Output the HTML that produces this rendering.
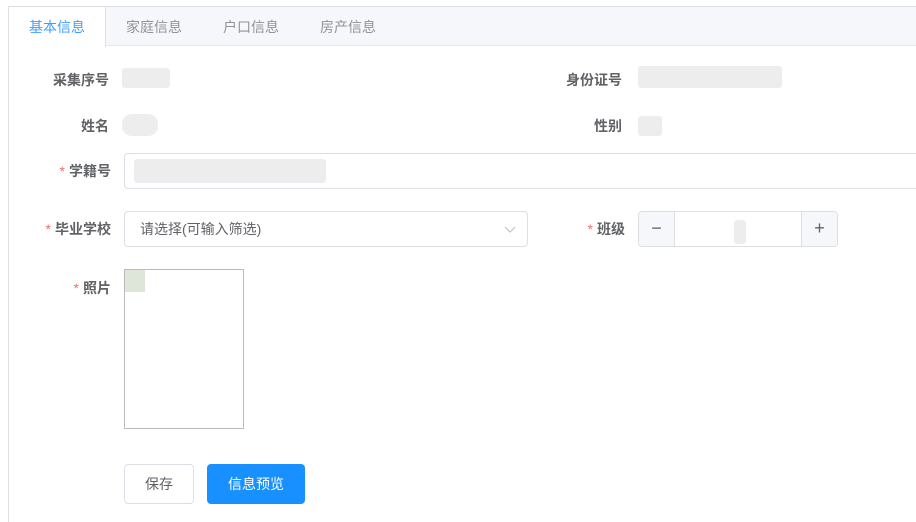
<!DOCTYPE html>
<html><head><meta charset="utf-8"><style>
*{box-sizing:border-box;margin:0;padding:0}
html,body{width:916px;height:522px;overflow:hidden}
body{background:#fff;font-family:"Liberation Sans","Noto Sans CJK SC",sans-serif;position:relative}
.box{position:absolute;left:8px;top:6px;width:908px;height:516px;border:1px solid #dcdfe6;border-bottom:none;border-right:none}
.hdr{position:absolute;left:0;top:0;right:0;height:39px;background:#f5f7fa;border-bottom:1px solid #e4e7ed}
.tab{position:absolute;top:0;height:40px;line-height:41px;font-size:14px;color:#909399}
.tab.a{left:0;width:97px;background:#fff;color:#409eff;text-align:center;border-right:1px solid #dcdfe6;height:40px}
.lbl{position:absolute;font-size:14px;font-weight:bold;color:#606266;text-align:right;white-space:nowrap}
.lbl i{color:#f56c6c;font-style:normal;font-weight:normal;margin-right:4px}
.blur{position:absolute;background:#e8e8ea;border-radius:3px;opacity:.8}
.inp{position:absolute;border:1px solid #dcdfe6;border-radius:4px;background:#fff}
.btn{position:absolute;border-radius:4px;font-size:14px;text-align:center}
</style></head><body>
<div class="box">
<div class="hdr"></div>
<div class="tab a">基本信息</div>
<div class="tab" style="left:117px">家庭信息</div>
<div class="tab" style="left:214px">户口信息</div>
<div class="tab" style="left:311px">房产信息</div>
</div>
<div class="lbl" style="right:807px;top:70px">采集序号</div>
<div class="blur" style="left:122px;top:68px;width:48px;height:20px"></div>
<div class="lbl" style="right:294px;top:70px">身份证号</div>
<div class="blur" style="left:638px;top:66px;width:144px;height:22px"></div>
<div class="lbl" style="right:807px;top:116px">姓名</div>
<div class="blur" style="left:122px;top:114px;width:36px;height:22px;border-radius:10px"></div>
<div class="lbl" style="right:294px;top:116px">性别</div>
<div class="blur" style="left:638px;top:116px;width:24px;height:20px"></div>
<div class="lbl" style="right:805px;top:161px"><i>*</i>学籍号</div>
<div class="inp" style="left:124px;top:153px;width:800px;height:36px"></div>
<div class="blur" style="left:134px;top:159px;width:192px;height:24px"></div>
<div class="lbl" style="right:805px;top:219px"><i>*</i>毕业学校</div>
<div class="inp" style="left:124px;top:211px;width:404px;height:36px"></div>
<div style="position:absolute;left:140px;top:219px;font-size:14px;color:#606266">请选择(可输入筛选)</div>
<svg style="position:absolute;left:504px;top:223px" width="12" height="12" viewBox="0 0 12 12"><path d="M1 4l5 5 5-5" fill="none" stroke="#c0c4cc" stroke-width="1.2"/></svg>
<div class="lbl" style="right:291px;top:219px"><i>*</i>班级</div>
<div class="inp" style="left:638px;top:211px;width:200px;height:36px"></div>
<div style="position:absolute;left:639px;top:212px;width:36px;height:34px;background:#f5f7fa;border-right:1px solid #dcdfe6;border-radius:4px 0 0 4px;text-align:center;line-height:32px;color:#606266;font-size:18px">−</div>
<div style="position:absolute;left:801px;top:212px;width:36px;height:34px;background:#f5f7fa;border-left:1px solid #dcdfe6;border-radius:0 4px 4px 0;text-align:center;line-height:32px;color:#606266;font-size:18px">+</div>
<div class="blur" style="left:734px;top:220px;width:12px;height:24px"></div>
<div class="lbl" style="right:805px;top:278px"><i>*</i>照片</div>
<div style="position:absolute;left:124px;top:269px;width:120px;height:160px;border:1px solid #bbb;background:#fff"></div>
<div style="position:absolute;left:125px;top:270px;width:20px;height:22px;background:#dde6d8"></div>
<div class="btn" style="left:124px;top:464px;width:70px;height:40px;border:1px solid #dcdfe6;color:#606266;line-height:38px">保存</div>
<div class="btn" style="left:207px;top:464px;width:98px;height:40px;background:#1890ff;color:#fff;line-height:40px">信息预览</div>
</body></html>
